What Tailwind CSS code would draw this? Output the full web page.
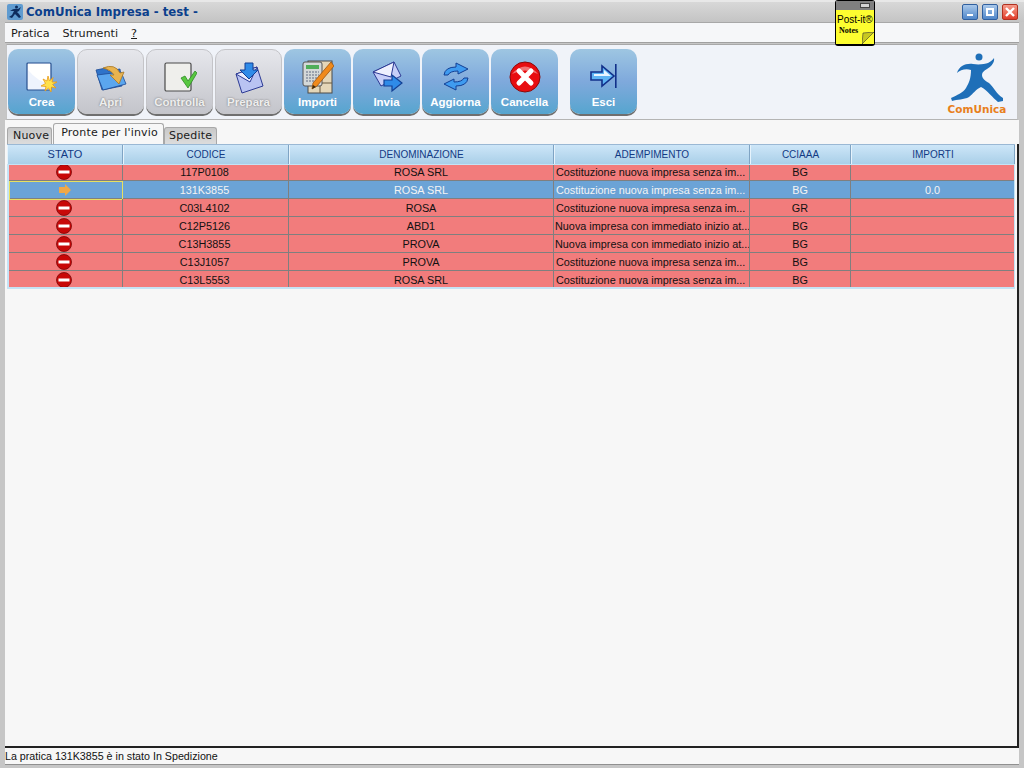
<!DOCTYPE html>
<html lang="it">
<head>
<meta charset="UTF-8">
<title>ComUnica Impresa</title>
<script src="https://cdn.jsdelivr.net/npm/@tailwindcss/browser@4"></script>
</head>
<body class="m-0 w-[1024px] h-[768px] overflow-hidden relative bg-[#c8c8c8] font-['Liberation_Sans',sans-serif]">
<!-- window frame -->
<div class="w-[1024px] h-[768px] flex flex-col border-t-2 border-t-[#e8e8e8] bg-[#c6c6c6]">

  <!-- title bar -->
  <div class="h-[20px] shrink-0 flex items-center pl-[7px] pr-[6px] bg-gradient-to-b from-[#d8d8d8] to-[#c4c4c4]">
    <svg class="w-[16px] h-[16px]" viewBox="0 0 16 16"><rect width="16" height="16" rx="2" fill="#5f9bd0"/><circle cx="9.5" cy="3" r="1.5" fill="#0d2c5e"/><path d="M3 7 Q7 4 11 5 L14 3 L12 7 L10 8 L12 10 L14 13 L12 14 L8 10 L5 14 L2 13 L5 11 L7 7 Z" fill="#0d2c5e"/></svg>
    <span class="ml-[3px] pt-[1px] font-['DejaVu_Sans',sans-serif] font-bold text-[11.75px] text-[#0b3f8c]">ComUnica Impresa - test -</span>
    <div class="ml-auto flex gap-[4px]">
      <div class="w-[16px] h-[16px] rounded-[2px] border border-[#2f5f9f] bg-gradient-to-b from-[#a9c8ea] to-[#4f86c8] flex items-end justify-center pb-[3px]"><div class="w-[6px] h-[2px] bg-white"></div></div>
      <div class="w-[16px] h-[16px] rounded-[2px] border border-[#2f5f9f] bg-gradient-to-b from-[#a9c8ea] to-[#4f86c8] flex items-center justify-center"><div class="w-[8px] h-[8px] border-2 border-white"></div></div>
      <div class="w-[16px] h-[16px] rounded-[2px] border border-[#b03020] bg-gradient-to-b from-[#f59a8a] to-[#e03a28] flex items-center justify-center">
        <svg class="w-[10px] h-[10px]" viewBox="0 0 10 10"><path d="M1 1 L9 9 M9 1 L1 9" stroke="#fff" stroke-width="2.4"/></svg>
      </div>
    </div>
  </div>

  <!-- menu bar -->
  <div class="h-[21px] shrink-0 ml-[5px] mr-[5px] pt-[3px] bg-[#f6f7f9] border-t border-t-[#a8a8a8] border-b border-b-[#a0a0a0] flex items-center pl-[6px] gap-[13px] font-['DejaVu_Sans',sans-serif] text-[11.2px] text-[#1a1a1a]">
    <span>Pratica</span>
    <span>Strumenti</span>
    <span class="underline">?</span>
  </div>

  <!-- toolbar -->
  <div class="h-[76px] shrink-0 ml-[6px] mr-[6px] mt-[1px] bg-[#f0f3f9] border-t border-t-[#a8a8a8] border-x border-x-[#c4c4c4] border-b border-b-[#b4b4b4] flex pl-[1px] pt-[4px] relative">
    <div class="flex gap-[2px]">
      <button class="w-[67px] h-[65px] rounded-[10px] bg-gradient-to-b from-[#9ec6e2] via-[#7fa9dc] to-[#55a5cf] shadow-[0_2px_0_#6f6f6f] flex flex-col items-center pt-[13px] text-[11.5px] font-bold text-white">
        <svg class="w-[32px] h-[32px]" viewBox="0 0 32 32"><rect x="1" y="1" width="24" height="27" rx="1" fill="#eef3fd" stroke="#28508f" stroke-width="1.2"/><path d="M2 2 H24 V22 Q12 20 2 8 Z" fill="#ffffff"/><path d="M22 14 L23.5 19 L27 15.5 L26 20 L31 20 L26.5 22.5 L30 26 L25.5 25 L25 30 L22.5 26 L19 29 L20 24.5 L15 24 L19.5 21.5 L17 17 L21 19 Z" fill="#ffe14a" stroke="#e89a18" stroke-width="0.8"/></svg>
        <span class="mt-[1px] leading-[14px]">Crea</span>
      </button>
      <button class="w-[67px] h-[65px] rounded-[10px] border border-[#c4c4c8] bg-gradient-to-b from-[#e6e7ec] to-[#c4c5cb] shadow-[0_2px_0_#6f6f6f] flex flex-col items-center pt-[12px] text-[11.5px] font-bold text-[#eeeeee] [text-shadow:0_0_2px_#707070]">
        <svg class="w-[32px] h-[32px]" viewBox="0 0 32 32"><path d="M1 8 L11 6 L13 9 L25 7 L27 24 L7 28 Z" fill="#2f73c9" stroke="#1d4a94" stroke-width="0.8"/><path d="M2 13 L26 10 L31 22 L8 28 Z" fill="#5ba6ee" stroke="#1d4a94" stroke-width="0.8"/><path d="M8 6 Q20 1 25 11 L29 10 L24 22 L15 13 L19 13 Q16 8 8 6 Z" fill="#e8b450" stroke="#a87622" stroke-width="0.8"/></svg>
        <span class="mt-[1px] leading-[14px]">Apri</span>
      </button>
      <button class="w-[67px] h-[65px] rounded-[10px] border border-[#c4c4c8] bg-gradient-to-b from-[#e6e7ec] to-[#c4c5cb] shadow-[0_2px_0_#6f6f6f] flex flex-col items-center pt-[12px] text-[11.5px] font-bold text-[#eeeeee] [text-shadow:0_0_2px_#707070]">
        <svg class="w-[34px] h-[32px]" viewBox="0 0 34 32"><rect x="2" y="1" width="26" height="28" rx="1.5" fill="#efefec" stroke="#4a4a4a" stroke-width="1.2"/><path d="M18 16 L22 14 L25 19 L32 9 L34 11 L25 26 Z" fill="#58c840" stroke="#2f8a26" stroke-width="0.8"/></svg>
        <span class="mt-[1px] leading-[14px]">Controlla</span>
      </button>
      <button class="w-[67px] h-[65px] rounded-[10px] border border-[#c4c4c8] bg-gradient-to-b from-[#e6e7ec] to-[#c4c5cb] shadow-[0_2px_0_#6f6f6f] flex flex-col items-center pt-[12px] text-[11.5px] font-bold text-[#eeeeee] [text-shadow:0_0_2px_#707070]">
        <svg class="w-[32px] h-[32px]" viewBox="0 0 32 32"><path d="M3 12 L24 5 L30 24 L9 31 Z" fill="#b9c3f2" stroke="#2c3a94" stroke-width="1"/><path d="M3 12 L24 5 L17 20 Z" fill="#e9edfd" stroke="#2c3a94" stroke-width="1"/><path d="M12 1 H20 V8 H25 L16 17 L7 8 H12 Z" fill="#2f8be8" stroke="#123f94" stroke-width="1"/></svg>
        <span class="mt-[1px] leading-[14px]">Prepara</span>
      </button>
      <button class="w-[67px] h-[65px] rounded-[10px] bg-gradient-to-b from-[#9ec6e2] via-[#7fa9dc] to-[#55a5cf] shadow-[0_2px_0_#6f6f6f] flex flex-col items-center pt-[10px] text-[11.5px] font-bold text-white">
        <svg class="w-[32px] h-[35px]" viewBox="0 0 32 35"><rect x="6" y="2" width="24" height="32" fill="#e4d6b8" stroke="#4a4a4a"/><path d="M6 24 H30 M18 24 V34" stroke="#6a5a40"/><rect x="1" y="3" width="19" height="24" rx="2" fill="#d4d8d8" stroke="#555"/><rect x="4" y="6" width="13" height="4" fill="#4fae5a"/><path d="M4 13 H17 M4 16 H17 M4 19 H17 M4 22 H17" stroke="#8890a0" stroke-width="1.5" stroke-dasharray="2 1"/><path d="M29 3 L32 7 L15 27 L10 30 L11 24 Z" fill="#f08a1c" stroke="#9a5410" stroke-width="0.8"/><path d="M10 30 L11 26 L14 28 Z" fill="#3a2a10"/></svg>
        <span class="mt-[1px] leading-[14px]">Importi</span>
      </button>
      <button class="w-[67px] h-[65px] rounded-[10px] bg-gradient-to-b from-[#9ec6e2] via-[#7fa9dc] to-[#55a5cf] shadow-[0_2px_0_#6f6f6f] flex flex-col items-center pt-[10px] text-[11.5px] font-bold text-white">
        <svg class="w-[32px] h-[34px]" viewBox="0 0 32 34"><path d="M2 13 L23 3 L30 17 L10 27 Z" fill="#c6cef8" stroke="#2c3a94" stroke-width="1"/><path d="M2 13 L23 3 L20 18 Z" fill="#eef0fe" stroke="#2c3a94" stroke-width="1"/><path d="M13 21 H21 V16 L31 24 L21 32 V27 H13 Z" fill="#2f8be8" stroke="#123f94" stroke-width="1.2"/></svg>
        <span class="mt-[2px] leading-[14px]">Invia</span>
      </button>
      <button class="w-[67px] h-[65px] rounded-[10px] bg-gradient-to-b from-[#9ec6e2] via-[#7fa9dc] to-[#55a5cf] shadow-[0_2px_0_#6f6f6f] flex flex-col items-center pt-[13px] text-[11.5px] font-bold text-white">
        <svg class="w-[26px] h-[30px]" viewBox="0 0 26 30"><path d="M1 13 Q2 5 13 5 V1 L25 7 L15 12 V9 Q7 9 5 13 Z" fill="#3f9bf0" stroke="#123f94" stroke-width="1"/><path d="M25 16 Q24 24 13 24 V28 L1 22 L11 17 V20 Q19 20 21 16 Z" fill="#3f9bf0" stroke="#123f94" stroke-width="1"/></svg>
        <span class="mt-[3px] leading-[14px]">Aggiorna</span>
      </button>
      <button class="w-[67px] h-[65px] rounded-[10px] bg-gradient-to-b from-[#9ec6e2] via-[#7fa9dc] to-[#55a5cf] shadow-[0_2px_0_#6f6f6f] flex flex-col items-center pt-[12px] text-[11.5px] font-bold text-white">
        <svg class="w-[32px] h-[32px]" viewBox="0 0 32 32"><circle cx="16" cy="16" r="15" fill="#e80d10" stroke="#8a0a0a" stroke-width="1"/><path d="M3 13 Q16 -2 29 13 Q16 6 3 13 Z" fill="#f7a0a0" opacity="0.7"/><path d="M10 10 L22 22 M22 10 L10 22" stroke="#fff" stroke-width="5" stroke-linecap="round"/></svg>
        <span class="mt-[2px] leading-[14px]">Cancella</span>
      </button>
      <button class="ml-[10px] w-[67px] h-[65px] rounded-[10px] bg-gradient-to-b from-[#9ec6e2] via-[#7fa9dc] to-[#55a5cf] shadow-[0_2px_0_#6f6f6f] flex flex-col items-center pt-[14px] text-[11.5px] font-bold text-white">
        <svg class="w-[28px] h-[28px]" viewBox="0 0 28 28"><path d="M1 9 H12 V3 L24 13 L12 23 V17 H1 Z" fill="#5fb4f4" stroke="#12308a" stroke-width="1.6"/><path d="M4 11 H14 V7 L21 13 H4 Z" fill="#eaf5ff"/><rect x="25" y="1" width="1.6" height="24" fill="#12308a"/></svg>
        <span class="mt-[4px] leading-[14px]">Esci</span>
      </button>
    </div>
    <!-- logo -->
    <div class="absolute left-[940px] top-[7px] flex flex-col items-center w-[60px]">
      <svg class="w-[56px] h-[50px]" viewBox="0 0 56 50"><circle cx="30" cy="5" r="3.5" fill="#1f6fb8"/><path d="M8 21 C10 14 17 11 24 12 C30 13 36 12 39 11 C42 9 44 8 45 6 C46 10 42 15 38 17 C35 19 33 20 33 23 C33 26 35 28 40 31 C44 34 48 43 54 46 L54 49 L49 50 C44 46 38 38 32 35 C27 37 24 42 20 45 C15 48 8 47 3 49 L2 46 C8 43 14 41 17 36 C20 31 22 26 22 18 C17 16 11 18 8 21 Z" fill="#1f6fb8"/></svg>
      <span class="mt-[1px] font-['DejaVu_Sans',sans-serif] font-bold text-[10.5px] leading-[12px] text-[#e8801c]">ComUnica</span>
    </div>
  </div>

  <!-- main panel -->
  <div class="flex-1 min-h-0 ml-[5px] mr-[5px] bg-[#f7f7f7] border-b-2 border-b-[#222] flex flex-col pt-[3px]">
    <!-- tabs -->
    <div class="h-[21px] shrink-0 pl-[2px] flex items-end font-['DejaVu_Sans',sans-serif] text-[11px] text-[#1a1a1a] tracking-[0.2px]">
      <div class="h-[17px] pl-[5px] pr-[2px] bg-gradient-to-b from-[#c8c8c8] to-[#dcdcdc] border border-[#a8a8a8] border-b-0 rounded-t-[3px] flex items-center">Nuove</div>
      <div class="h-[21px] pl-[7px] pr-[5px] pb-[1px] ml-[1px] bg-[#f7f7f7] border border-[#a8a8a8] border-b-0 rounded-t-[3px] flex items-center z-10">Pronte per l'invio</div>
      <div class="h-[17px] px-[4px] bg-gradient-to-b from-[#c8c8c8] to-[#dcdcdc] border border-[#a8a8a8] border-b-0 rounded-t-[3px] flex items-center">Spedite</div>
    </div>
    <!-- table, with the dark edge on its right -->
    <div class="flex-1 min-h-0 border-r-2 border-r-[#222]">
      <div class="ml-[2px] w-[1008px] bg-[#c5e3f5] pb-[2px] text-[10.85px] text-[#111]">
        <div class="grid grid-cols-[116px_166px_265px_196px_101px_164px] h-[20px] text-[10px] text-[#123a84] border-t border-t-[#9ab8d4]">
          <div class="text-center text-[11px] leading-[19px] bg-gradient-to-b from-[#cde6f8] to-[#a9cfe8] border-r border-r-[#7fa4c4] border-l border-l-[#e6f3fc]">STATO</div>
          <div class="text-center leading-[19px] bg-gradient-to-b from-[#cde6f8] to-[#a9cfe8] border-r border-r-[#7fa4c4] border-l border-l-[#e6f3fc]">CODICE</div>
          <div class="text-center leading-[19px] bg-gradient-to-b from-[#cde6f8] to-[#a9cfe8] border-r border-r-[#7fa4c4] border-l border-l-[#e6f3fc]">DENOMINAZIONE</div>
          <div class="text-center leading-[19px] bg-gradient-to-b from-[#cde6f8] to-[#a9cfe8] border-r border-r-[#7fa4c4] border-l border-l-[#e6f3fc]">ADEMPIMENTO</div>
          <div class="text-center leading-[19px] bg-gradient-to-b from-[#cde6f8] to-[#a9cfe8] border-r border-r-[#7fa4c4] border-l border-l-[#e6f3fc]">CCIAAA</div>
          <div class="text-center leading-[19px] bg-gradient-to-b from-[#cde6f8] to-[#a9cfe8] border-r border-r-[#7fa4c4] border-l border-l-[#e6f3fc]">IMPORTI</div>
        </div>
        <!-- first row is scrolled 2px under the header -->
        <div class="ml-[2px] mr-[1px] mt-[1px] h-[122px] overflow-hidden">
          <div class="-mt-[2px]" id="rows"></div>
        </div>
      </div>
    </div>
  </div>

  <!-- status bar -->
  <div class="h-[17px] shrink-0 ml-[5px] mr-[5px] bg-[#f7f7f7] text-[10.7px] leading-[16px] text-[#111] border-b border-b-[#909090]">La pratica 131K3855 è in stato In Spedizione</div>
  <div class="h-[3px] shrink-0"></div>
</div>

<!-- post-it desktop widget -->
<div class="absolute left-[835px] top-0 w-[40px] h-[46px] bg-black rounded-[3px] p-[1px] pb-[2px] z-20">
  <div class="h-[9px] bg-[#808080] relative"><div class="absolute right-[4px] top-[2px] w-[10px] h-[5px] bg-[#d4d4d4] border border-[#444]"></div></div>
  <div class="h-[34px] bg-[#fdfd30] bg-[radial-gradient(#ffffff_0.5px,transparent_0.6px)] bg-[length:2px_2px] relative overflow-hidden">
    <div class="font-['Liberation_Sans',sans-serif] text-[10px] leading-[12px] text-black pl-[1px] pt-[4px] box-content whitespace-nowrap">Post-it®</div>
    <div class="font-['Liberation_Serif',serif] font-bold text-[8px] leading-[10px] text-black pl-[3px]">Notes</div>
    <svg class="absolute right-0 bottom-0 w-[12px] h-[12px]" viewBox="0 0 12 12"><path d="M0 12 L12 0 L1 1 Z" fill="#c8c820" stroke="#333" stroke-width="0.6"/></svg>
  </div>
</div>

<script>
  const noEntry = '<svg class="w-[16px] h-[16px]" viewBox="0 0 16 16"><circle cx="8" cy="8" r="7.5" fill="#c80808" stroke="#7a0808" stroke-width="0.8"/><rect x="2.5" y="6.5" width="11" height="3" fill="#fff"/></svg>';
  const arrow = '<svg class="w-[12px] h-[14px]" viewBox="0 0 12 14"><path d="M0 4 H6 V1 L12 7 L6 13 V10 H0 Z" fill="#f0a848"/></svg>';
  const costituzione = 'Costituzione nuova impresa senza im...';
  const nuova = 'Nuova impresa con immediato inizio at...';
  const data = [
    ['117P0108', 'ROSA SRL', costituzione, 'BG', ''],
    ['131K3855', 'ROSA SRL', costituzione, 'BG', '0.0'],
    ['C03L4102', 'ROSA', costituzione, 'GR', ''],
    ['C12P5126', 'ABD1', nuova, 'BG', ''],
    ['C13H3855', 'PROVA', nuova, 'BG', ''],
    ['C13J1057', 'PROVA', costituzione, 'BG', ''],
    ['C13L5553', 'ROSA SRL', costituzione, 'BG', '']
  ];
  document.getElementById('rows').innerHTML = data.map((r, i) => {
    const sel = i === 1;
    const rowCls = sel ? 'bg-[#6ba3d6] text-[#f4f4f4]' : 'bg-[#f27c7c]';
    const first = sel ? 'border border-[#e8e060]' : 'border-r border-r-[#7f7f7f]';
    const pad = r[2] === nuova ? 'pl-[1px]' : 'pl-[2px]';
    return `<div class="grid grid-cols-[114px_166px_265px_196px_101px_163px] h-[18px] leading-[19px] border-b border-b-[#7f7f7f] ${rowCls}">
      <div class="flex items-center justify-center pr-[3px] pb-[2px] ${first}">${sel ? arrow : noEntry}</div>
      <div class="text-center pr-[2px] border-r border-r-[#7f7f7f]">${r[0]}</div>
      <div class="text-center border-r border-r-[#7f7f7f]">${r[1]}</div>
      <div class="${pad} whitespace-nowrap overflow-hidden border-r border-r-[#7f7f7f]">${r[2]}</div>
      <div class="text-center border-r border-r-[#7f7f7f]">${r[3]}</div>
      <div class="text-center">${r[4]}</div>
    </div>`;
  }).join('');
</script>
</body>
</html>
